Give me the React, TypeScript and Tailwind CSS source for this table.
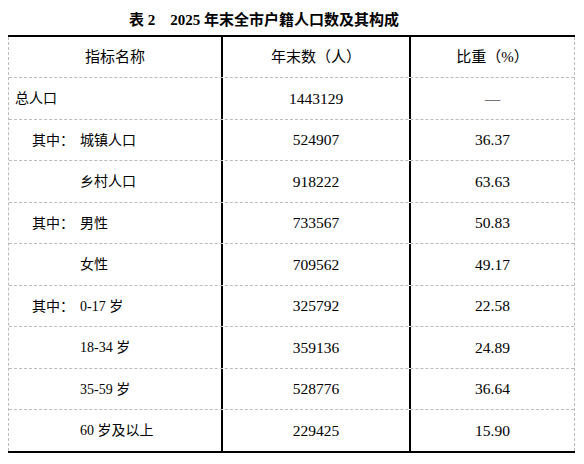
const rows = [
  { name: "总人口", level: 0, total: "1443129", share: "—", h: "h-[42px]" },
  { name: "城镇人口", level: 1, total: "524907", share: "36.37", h: "h-[41px]" },
  { name: "乡村人口", level: 2, total: "918222", share: "63.63", h: "h-[42px]" },
  { name: "男性", level: 1, total: "733567", share: "50.83", h: "h-[41px]" },
  { name: "女性", level: 2, total: "709562", share: "49.17", h: "h-[42px]" },
  { name: "0-17 岁", level: 1, total: "325792", share: "22.58", h: "h-[41px]" },
  { name: "18-34 岁", level: 2, total: "359136", share: "24.89", h: "h-[42px]" },
  { name: "35-59 岁", level: 2, total: "528776", share: "36.64", h: "h-[41px]" },
  { name: "60 岁及以上", level: 2, total: "229425", share: "15.90", h: "h-[41px]" },
];

const font = { fontFamily: '"Liberation Serif", "Noto Sans CJK SC", serif' };

export default function App() {
  return (
    <div className="w-[584px] h-[464px] bg-white text-black" style={font}>
      <div className="pt-[10px] pl-[129px] h-[35px]">
        <h1 className="text-[15px] leading-[20px] font-bold whitespace-pre">
          表 2　2025 年末全市户籍人口数及其构成
        </h1>
      </div>

      <div className="ml-[8px] w-[567px] border-t-2 border-b-2 border-black">
        <div className="border-x border-dashed border-[#bcbcbc]">
          {/* header */}
          <div className="grid grid-cols-[214px_188px_163px] h-[41px] border-b border-dashed border-[#bcbcbc] text-[15px]">
            <div className="flex items-center justify-center border-r-2 border-black">
              指标名称
            </div>
            <div className="flex items-center justify-center border-r-2 border-black">
              年末数（人）
            </div>
            <div className="flex items-center justify-center">比重（%）</div>
          </div>

          {rows.map((r, i) => (
            <div
              key={r.name}
              className={
                "grid grid-cols-[214px_188px_163px] text-[14px] " +
                r.h +
                (i === rows.length - 1 ? "" : " border-b border-dashed border-[#bcbcbc]")
              }
            >
              <div
                className={
                  "flex items-center border-r-2 border-black " +
                  (r.level === 0 ? "pl-[6px]" : r.level === 1 ? "pl-[23px]" : "pl-[71px]")
                }
              >
                {r.level === 1 && <span className="inline-block w-[48px]">其中：</span>}
                <span>{r.name}</span>
              </div>
              <div className="flex items-center justify-center border-r-2 border-black text-[15.5px]">
                {r.total}
              </div>
              <div className="flex items-center justify-center text-[15.5px]">{r.share}</div>
            </div>
          ))}
        </div>
      </div>
    </div>
  );
}
